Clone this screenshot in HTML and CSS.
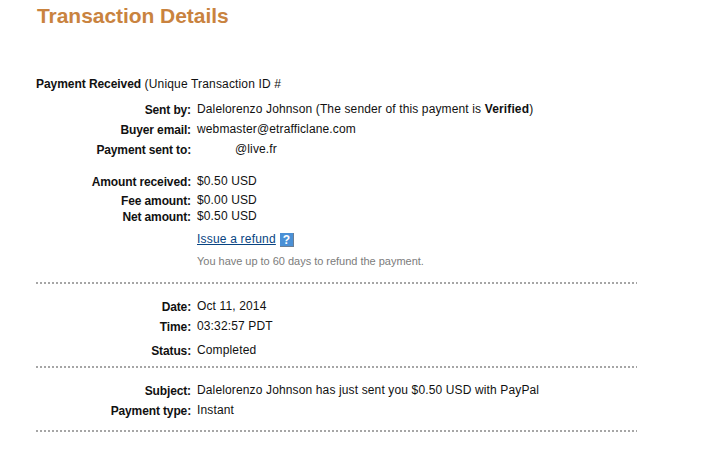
FILE: index.html
```html
<!DOCTYPE html>
<html lang="en">
<head>
<meta charset="utf-8">
<title>Transaction Details</title>
<link rel="stylesheet" href="styles.css">
</head>
<body>
<main class="page">
  <h1 class="title">Transaction Details</h1>
  <p class="intro"><strong>Payment Received</strong> (Unique Transaction ID #</p>

  <dl class="rows">
    <div class="row r-sent"><dt>Sent by:</dt><dd>Dalelorenzo Johnson (The sender of this payment is <strong>Verified</strong>)</dd></div>
    <div class="row r-next"><dt>Buyer email:</dt><dd>webmaster@etrafficlane.com</dd></div>
    <div class="row r-next"><dt>Payment sent to:</dt><dd class="masked">@live.fr</dd></div>
    <div class="row r-amount"><dt>Amount received:</dt><dd>$0.50 USD</dd></div>
    <div class="row r-fee"><dt>Fee amount:</dt><dd>$0.00 USD</dd></div>
    <div class="row r-net"><dt>Net amount:</dt><dd>$0.50 USD</dd></div>
    <div class="row r-refund"><dt></dt><dd><a class="link" href="#">Issue a refund</a><span class="help">?</span></dd></div>
    <div class="row r-note"><dt></dt><dd class="note">You have up to 60 days to refund the payment.</dd></div>
  </dl>
  <hr class="rule rule-a">

  <dl class="rows">
    <div class="row"><dt>Date:</dt><dd>Oct 11, 2014</dd></div>
    <div class="row r-next"><dt>Time:</dt><dd>03:32:57 PDT</dd></div>
    <div class="row r-status"><dt>Status:</dt><dd>Completed</dd></div>
  </dl>
  <hr class="rule rule-b">

  <dl class="rows">
    <div class="row"><dt>Subject:</dt><dd>Dalelorenzo Johnson has just sent you $0.50 USD with PayPal</dd></div>
    <div class="row r-next"><dt>Payment type:</dt><dd>Instant</dd></div>
  </dl>
  <hr class="rule rule-c">
</main>
</body>
</html>
```

FILE: styles.css
```css
html, body {
  margin: 0;
  padding: 0;
  background: #fff;
}

body {
  font-family: "Liberation Sans", Arial, sans-serif;
  font-size: 12px;
  line-height: 16px;
  color: #111;
  overflow: hidden;
}

.page {
  width: 610px;
  height: 450px;
  padding-left: 36px;
}

.title {
  margin: 0;
  padding-left: 1px;
  padding-top: 4px;
  font-size: 21px;
  line-height: 24px;
  font-weight: bold;
  color: #c9833f;
  letter-spacing: -0.05px;
}

.intro {
  margin: 48px 0 0;
  letter-spacing: 0.16px;
}

.intro strong {
  letter-spacing: -0.06px;
}

.rows {
  margin: 0;
}

.row {
  display: flex;
  height: 16px;
}

.row dt {
  width: 155px;
  flex: none;
  padding-top: 1px;
  text-align: right;
  font-weight: bold;
  letter-spacing: -0.13px;
}

.row dd {
  margin: 0 0 0 6px;
  letter-spacing: 0.135px;
}

.r-sent { margin-top: 9px; }
.r-next { margin-top: 4px; }
.r-amount { margin-top: 16px; }
.r-fee { margin-top: 3px; }
.r-net { margin-top: 0; }
.r-refund { margin-top: 7px; }
.r-note { margin-top: 6px; }
.r-status { margin-top: 8px; }

.row .masked {
  padding-left: 38px;
}

.link {
  color: #084482;
  text-decoration: underline;
  letter-spacing: 0.2px;
}

.help {
  display: inline-block;
  width: 14px;
  height: 14px;
  margin-left: 4px;
  background: #4a90d6;
  border-right: 1px solid #6b7f95;
  border-bottom: 1px solid #6b7f95;
  box-sizing: border-box;
  color: #fff;
  font-weight: bold;
  font-size: 12px;
  line-height: 14px;
  text-align: center;
  vertical-align: -1px;
}

.row .note {
  font-size: 11px;
  color: #7c7c7c;
  letter-spacing: -0.02px;
}

.rule {
  width: 601px;
  height: 2px;
  margin: 0;
  border: 0;
  background: repeating-linear-gradient(90deg, #a6a6a6 0 2px, transparent 2px 4px);
}

.rule-a { margin-top: 13px; margin-bottom: 14px; }
.rule-b { margin-top: 8px; margin-bottom: 14px; }
.rule-c { margin-top: 12px; }
```
